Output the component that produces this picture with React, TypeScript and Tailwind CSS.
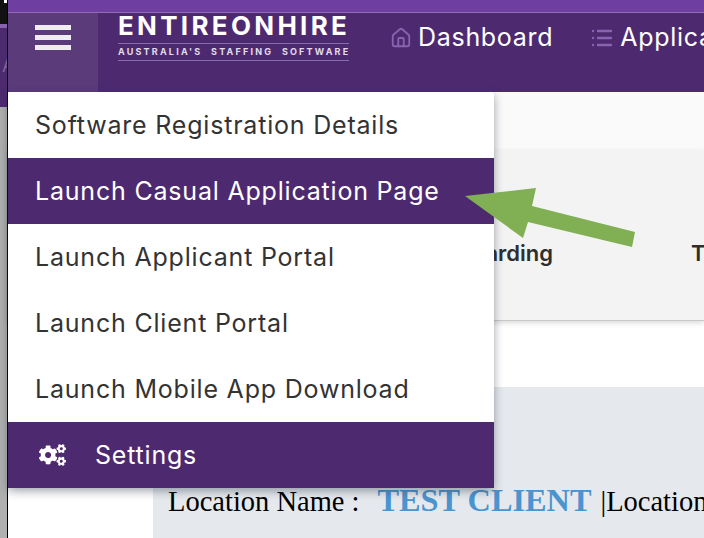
import React from "react";
import { House, List } from "lucide-react";
import { FaCogs } from "react-icons/fa";

const menuItems = [
  { label: "Software Registration Details", active: false },
  { label: "Launch Casual Application Page", active: true },
  { label: "Launch Applicant Portal", active: false },
  { label: "Launch Client Portal", active: false },
  { label: "Launch Mobile App Download", active: false },
];

function BackWindow() {
  return (
    <div className="flex h-full w-[7px] shrink-0 flex-col overflow-hidden">
      <div className="h-6 bg-[#111111]">
        <div className="ml-1 h-[3px] w-[3px] bg-white" />
      </div>
      <div className="h-1 bg-[#8a63b0]" />
      <div className="h-[79px] bg-[#4d2a70] pt-7 pl-0.5 text-lg leading-5 text-[#7d6494]">A</div>
      <div className="flex-1 bg-[#b0b0b0]" />
    </div>
  );
}

function Logo() {
  return (
    <div className="ml-5 flex w-[231px] flex-col self-start text-white">
      <div className="h-[30px] text-[26px] leading-[25px] font-bold tracking-[3.3px] whitespace-nowrap">
        ENTIREONHIRE
      </div>
      <div className="border-y border-[#8a6bab] text-center text-[9px] leading-[16px] font-bold tracking-[2.2px] whitespace-nowrap text-[#e3dcea]">
        AUSTRALIA'S&nbsp; STAFFING&nbsp; SOFTWARE
      </div>
    </div>
  );
}

function TopNav() {
  return (
    <div className="shrink-0">
      <div className="h-3 bg-[#6e3fa0]" />
      <div className="h-px bg-[#8f6cb5]" />
      <div className="flex h-[79px] bg-[#4d2a70]">
        <div className="flex w-[90px] shrink-0 flex-col items-center gap-[5px] bg-[#5b3b7a] pt-3">
          <span className="h-[5px] w-9 bg-[#efecf2]" />
          <span className="h-[5px] w-9 bg-[#efecf2]" />
          <span className="h-[5px] w-9 bg-[#efecf2]" />
        </div>
        <Logo />
        <div className="ml-[41px] flex h-[50px] items-center gap-[6px] text-[25px] tracking-[0.7px] whitespace-nowrap text-white">
          <House className="h-[22px] w-[22px] text-[#8a63b0]" strokeWidth={2} />
          <span>Dashboard</span>
          <List className="ml-[31px] h-6 w-6 text-[#8a63b0]" strokeWidth={2.4} />
          <span>Applications</span>
        </div>
      </div>
    </div>
  );
}

function DropdownMenu() {
  return (
    <div className="absolute top-[92px] left-0 w-[486px] rounded-r-[3px] bg-white tracking-[0.8px] shadow-[0_3px_10px_rgba(40,50,70,0.45)]">
      {menuItems.map((item) => (
        <div
          key={item.label}
          className={
            item.active
              ? "flex h-[66px] items-center bg-[#4d2a70] pt-0.5 pl-[27px] text-[25px] whitespace-nowrap text-white"
              : "flex h-[66px] items-center pt-0.5 pl-[27px] text-[25px] whitespace-nowrap text-[#333333]"
          }
        >
          {item.label}
        </div>
      ))}
      <div className="flex h-[66px] items-center gap-[29px] bg-[#4d2a70] pl-[31px] text-[25px] text-white">
        <FaCogs className="h-[26px] w-[27px]" />
        <span className="pt-0.5">Settings</span>
      </div>
    </div>
  );
}

function Arrow() {
  return (
    <svg className="absolute top-0 left-[-8px] h-[538px] w-[704px]" viewBox="0 0 704 538">
      <polygon
        points="465,196 536,188 532,206 635,232 632,247 528,222 523,238"
        fill="#80b053"
      />
    </svg>
  );
}

export default function App() {
  return (
    <div className="flex h-[538px] w-[704px] overflow-hidden bg-white font-['Inter',sans-serif]">
      <BackWindow />
      <div className="h-full w-px shrink-0 bg-black" />
      <div className="relative flex min-w-0 flex-1 flex-col">
        <TopNav />
        <div className="h-[58px] shrink-0 bg-[#fafafa]" />
        <div className="flex h-[171px] shrink-0 justify-end gap-[138px] overflow-hidden border-b border-[#c8c8c8] bg-[#f3f3f3] pt-[89px] text-[22px] leading-7 font-semibold whitespace-nowrap text-[#2e2e2e] shadow-[0_2px_5px_rgba(0,0,0,0.15)]">
          <span>Onboarding</span>
          <span className="w-[13px]">Timesheets</span>
        </div>
        <div className="h-[66px] shrink-0" />
        <div className="ml-[145px] flex flex-1 items-baseline overflow-hidden bg-[#e5e9ed] pt-[97px] pl-[15px] font-['Liberation_Serif',serif] text-[28.5px] leading-[32px] whitespace-nowrap text-black">
          <span>Location Name :</span>
          <span className="ml-[18px] text-[32.3px] font-bold text-[#4a94d0]">TEST CLIENT</span>
          <span className="ml-[9px]">|Location</span>
        </div>
        <DropdownMenu />
        <Arrow />
      </div>
    </div>
  );
}
